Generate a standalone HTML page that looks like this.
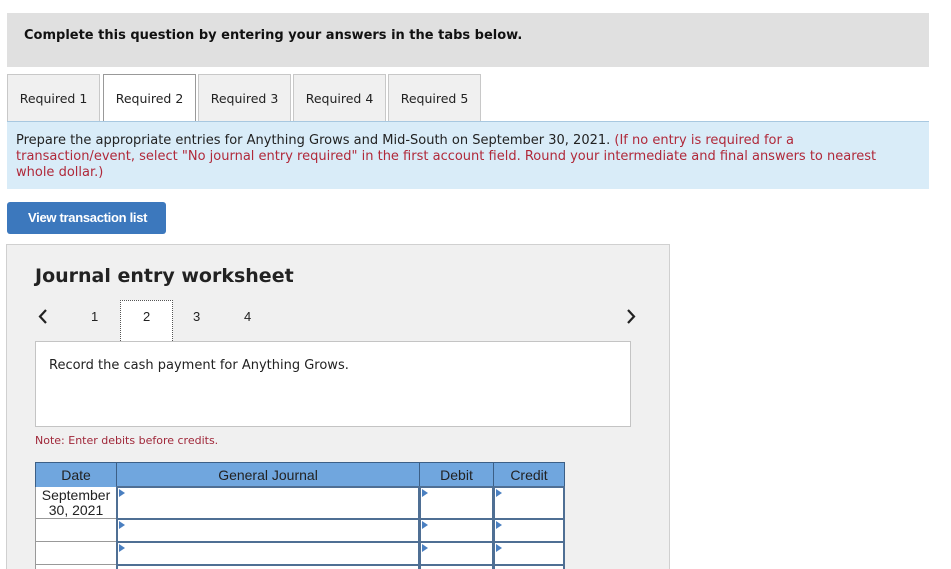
<!DOCTYPE html>
<html style="width:951px;height:569px;overflow:hidden"><head><style>
*{margin:0;padding:0;box-sizing:border-box}
body{width:951px;height:569px;overflow:hidden;background:#fff;font-family:Verdana,"DejaVu Sans",sans-serif;position:relative;color:#222}
.a{position:absolute}
.hdr{left:7px;top:13px;width:922px;height:54px;background:#e0e0e0;font-weight:bold;font-size:13px;padding:15px 0 0 17px;color:#111}
.tab{top:74px;height:48px;width:93px;background:#f0f0f0;border:1px solid #c8c8c8;border-bottom:none;font-size:12.5px;text-align:center;line-height:48px}
.tab.on{background:#fff;border-color:#999}
.info{left:7px;top:121px;width:922px;height:68px;background:#d9ecf8;border-top:1px solid #a8c8e0;font-size:13px;line-height:16px;padding:11px 0 0 9px;white-space:nowrap}
.info span{color:#b0293a}
.btn{left:7px;top:202px;width:159px;height:32px;background:#3c78bd;border-radius:3px;color:#fff;font-family:"Liberation Sans",Arial,sans-serif;font-weight:bold;font-size:13px;line-height:31px;padding-left:21px;letter-spacing:-0.3px}
.panel{left:6px;top:244px;width:664px;height:340px;background:#f0f0f0;border:1px solid #d0d0d0}
.ttl{left:35px;top:265px;font-size:19px;font-weight:bold;color:#222}
.num{top:309px;font-family:"Liberation Sans",Arial,sans-serif;font-size:13px}
.box{left:35px;top:341px;width:596px;height:86px;background:#fff;border:1px solid #c4c4c4;font-size:13px;padding:16px 0 0 13px}
.note{left:35px;top:434px;font-size:11px;color:#a0283a}
.c{position:absolute;font-family:"Liberation Sans",Arial,sans-serif;font-size:14px;text-align:center;color:#222}
.th{background:#70a6de;border:1px solid #3c5f86;height:26px;line-height:24px}
.td{background:#fff;border:2px solid #4f6f94}
.tri{position:absolute;left:1px;top:1px;width:0;height:0;border-top:4px solid transparent;border-bottom:4px solid transparent;border-left:6px solid #4a7fc0}
</style></head><body>
<div class="a hdr">Complete this question by entering your answers in the tabs below.</div>
<div class="a tab" style="left:7px">Required 1</div>
<div class="a tab on" style="left:103px">Required 2</div>
<div class="a tab" style="left:198px">Required 3</div>
<div class="a tab" style="left:293px">Required 4</div>
<div class="a tab" style="left:388px">Required 5</div>
<div class="a info">Prepare the appropriate entries for Anything Grows and Mid-South on September 30, 2021. <span>(If no entry is required for a<br>transaction/event, select "No journal entry required" in the first account field. Round your intermediate and final answers to nearest<br>whole dollar.)</span></div>
<div class="a btn">View transaction list</div>
<div class="a panel"></div>
<div class="a ttl">Journal entry worksheet</div>
<svg class="a" style="left:37px;top:308px" width="12" height="18"><path d="M9 2 L3 8.5 L9 15" stroke="#222" stroke-width="2.2" fill="none"/></svg>
<svg class="a" style="left:625px;top:308px" width="12" height="18"><path d="M3 2 L9 8.5 L3 15" stroke="#222" stroke-width="2.2" fill="none"/></svg>
<div class="a num" style="left:91px">1</div>
<div class="a" style="left:120px;top:300px;width:53px;height:43px;background:#fff;border:1px dotted #555"></div>
<div class="a num" style="left:143px">2</div>
<div class="a num" style="left:193px">3</div>
<div class="a num" style="left:244px">4</div>
<div class="a box">Record the cash payment for Anything Grows.</div>
<div class="a note">Note: Enter debits before credits.</div>
<div class="c th" style="left:35px;top:462px;width:82px">Date</div>
<div class="c th" style="left:116px;top:462px;width:304px">General Journal</div>
<div class="c th" style="left:419px;top:462px;width:75px">Debit</div>
<div class="c th" style="left:493px;top:462px;width:72px">Credit</div>
<div class="c" style="left:35px;top:487px;width:82px;height:32px;background:#fff;border:1px solid #999;border-top:none;line-height:15px;padding-top:1px">September<br>30, 2021</div>
<div class="c" style="left:35px;top:519px;width:82px;height:23px;background:#fff;border:1px solid #999;border-top:none"></div>
<div class="c" style="left:35px;top:542px;width:82px;height:23px;background:#fff;border:1px solid #999;border-top:none"></div>
<div class="c" style="left:35px;top:565px;width:82px;height:10px;background:#fff;border:1px solid #999;border-top:none"></div>
<div class="c td" style="left:116px;top:486px;width:304px;height:34px"><i class="tri"></i></div>
<div class="c td" style="left:419px;top:486px;width:75px;height:34px"><i class="tri"></i></div>
<div class="c td" style="left:493px;top:486px;width:72px;height:34px"><i class="tri"></i></div>
<div class="c td" style="left:116px;top:518px;width:304px;height:25px"><i class="tri"></i></div>
<div class="c td" style="left:419px;top:518px;width:75px;height:25px"><i class="tri"></i></div>
<div class="c td" style="left:493px;top:518px;width:72px;height:25px"><i class="tri"></i></div>
<div class="c td" style="left:116px;top:541px;width:304px;height:25px"><i class="tri"></i></div>
<div class="c td" style="left:419px;top:541px;width:75px;height:25px"><i class="tri"></i></div>
<div class="c td" style="left:493px;top:541px;width:72px;height:25px"><i class="tri"></i></div>
<div class="c td" style="left:116px;top:564px;width:304px;height:25px"></div>
<div class="c td" style="left:419px;top:564px;width:75px;height:25px"></div>
<div class="c td" style="left:493px;top:564px;width:72px;height:25px"></div>
</body></html>
